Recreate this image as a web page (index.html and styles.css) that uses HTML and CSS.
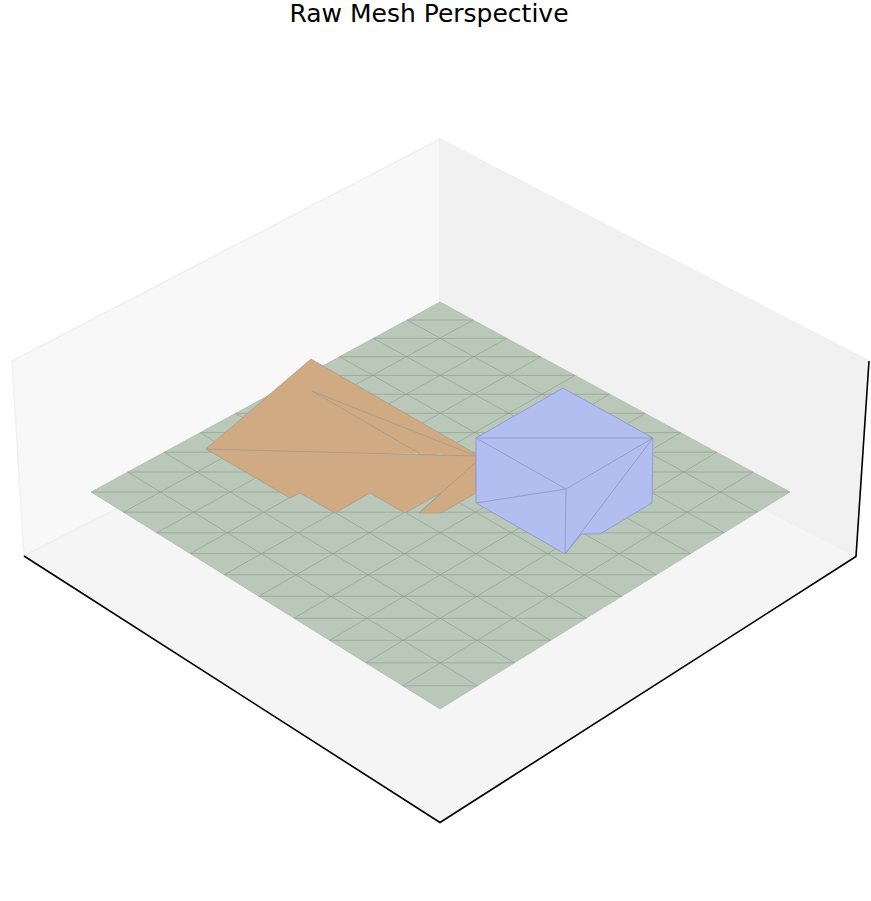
FILE: index.html
```html
<!DOCTYPE html>
<html lang="en">
<head>
<meta charset="utf-8">
<title>Raw Mesh Perspective</title>
<link rel="stylesheet" href="styles.css">
</head>
<body>
<svg class="plot" viewBox="0 0 871 901" width="871" height="901" role="img" aria-label="Raw Mesh Perspective">
  <text class="title" x="429" y="22">Raw Mesh Perspective</text>

  <polygon class="pane pane-left" points="12,361 440,139 440,344 24,556"/>
  <polygon class="pane pane-right" points="440,139 869,361 856,556 440,344"/>
  <polygon class="pane pane-floor" points="24,556 440,344 856,556 440,823"/>

  <polyline class="axes" points="24,556 440,822.5 856,556.5 869,361"/>

  <polygon class="ground" points="440,302 790,492 440,709 91,492"/>
  <path class="ground-edges" d="
    M406.9 320H473.2 M373.4 338.3H506.8 M339.5 356.7H540.8 M305.2 375.4H575.1 M270.6 394.2H609.9
    M235.5 413.3H645.1 M200 432.6H680.7 M164.1 452.2H716.7 M127.8 472H753.1 M91 492H790
    M123.6 512.2H757.3 M156.6 532.8H724.2 M190.1 553.6H690.6 M224.2 574.8H656.4 M258.8 596.3H621.7
    M293.9 618.2H586.5 M329.6 640.3H550.7 M365.8 662.9H514.4 M402.6 685.8H477.5
    M473.2 320L123.6 512.2 M506.8 338.3L156.6 532.8 M540.8 356.7L190.1 553.6 M575.1 375.4L224.2 574.8
    M609.9 394.2L258.8 596.3 M645.1 413.3L293.9 618.2 M680.7 432.6L329.6 640.3 M716.7 452.2L365.8 662.9
    M753.1 472L402.6 685.8
    M406.9 320L757.3 512.2 M373.4 338.3L724.2 532.8 M339.5 356.7L690.6 553.6 M305.2 375.4L656.4 574.8
    M270.6 394.2L621.7 596.3 M235.5 413.3L586.5 618.2 M200 432.6L550.7 640.3 M164.1 452.2L514.4 662.9
    M127.8 472L477.5 685.8"/>
  <polygon class="ground-outline" points="440,302 790,492 440,709 91,492"/>

  <polygon class="scan" points="311,359 476,454 476,493 441,513 419,513 441,493 405,513 370,493 335,513 300,493 290,498 206,449"/>
  <polygon class="scan-slit" points="378,453.2 422,453 422,454.8"/>
  <polygon class="scan-slit" points="437,455 440,453 443,455"/>
  <path class="scan-edges" d="M206 449L476 456 M312 391L476 456 M312 391L423 455.5 M476 462L419 513"/>

  <polygon class="box" points="563,388 653,438 652,503 600,534 581.5,534 565,554 476,503 476,438"/>
  <path class="box-edges" d="M476 438H653 M476 438L566 489 M653 438L566 489 M653 438L565 554 M566 489L565 554 M476 503L566 489"/>
</svg>
</body>
</html>
```

FILE: styles.css
```css
html, body {
  margin: 0;
  padding: 0;
  background: #ffffff;
}

.plot {
  display: block;
}

.title {
  font-family: "DejaVu Sans", sans-serif;
  font-size: 25px;
  fill: #000000;
  text-anchor: middle;
}

.pane {
  stroke: #f0f0f0;
  stroke-width: 1.5;
  stroke-linejoin: round;
}
.pane-left { fill: #f8f8f8; }
.pane-right { fill: #f1f1f1; }
.pane-floor { fill: #f5f5f5; }

.axes {
  fill: none;
  stroke: #000000;
  stroke-width: 1.6;
}

.ground { fill: #b9c8b9; }
.ground-edges {
  fill: none;
  stroke: #8f978f;
  stroke-width: 0.9;
  opacity: 0.65;
}
.ground-outline {
  fill: none;
  stroke: #a0aaa0;
  stroke-width: 0.5;
}

.scan {
  fill: #d0aa82;
  stroke: #a89a84;
  stroke-width: 0.7;
}
.scan-edges {
  fill: none;
  stroke: #a09a8c;
  stroke-width: 0.8;
}
.scan-slit {
  fill: #b9c8b9;
}

.box {
  fill: #b3bef0;
  stroke: #8f9ac6;
  stroke-width: 0.9;
}
.box-edges {
  fill: none;
  stroke: #8f9ac6;
  stroke-width: 0.9;
}
```
